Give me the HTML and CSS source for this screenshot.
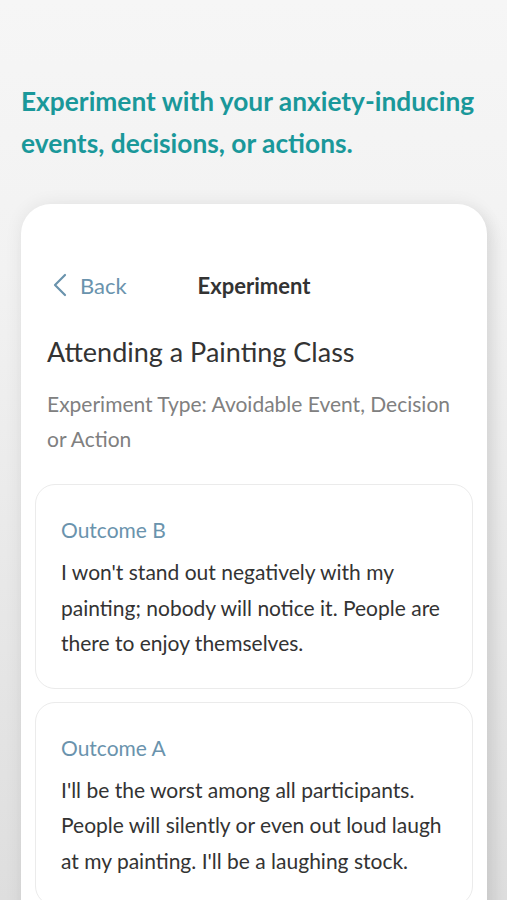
FILE: index.html
```html
<!DOCTYPE html>
<html lang="en">
<head>
    <meta charset="UTF-8">
    <meta name="viewport" content="width=device-width, initial-scale=1.0">
    <title>Experiment</title>
    <link rel="stylesheet" href="styles.css">
</head>
<body>
    <div class="page">
        <h1 class="intro">Experiment with your anxiety-inducing events, decisions, or actions.</h1>

        <div class="phone">
            <div class="nav">
                <a class="back" href="#">
                    <svg width="16" height="24" viewBox="0 0 16 24" fill="none" stroke="#6a93ad" stroke-width="2.2" stroke-linecap="round" stroke-linejoin="round">
                        <path d="M13 2 L3 12 L13 22"/>
                    </svg>
                    <span>Back</span>
                </a>
                <div class="nav-title">Experiment</div>
                <div></div>
            </div>

            <h2 class="title">Attending a Painting Class</h2>
            <p class="type">Experiment Type: Avoidable Event, Decision or Action</p>

            <div class="outcome">
                <div class="outcome-label">Outcome B</div>
                <p class="outcome-text">I won't stand out negatively with my painting; nobody will notice it. People are there to enjoy themselves.</p>
            </div>

            <div class="outcome">
                <div class="outcome-label">Outcome A</div>
                <p class="outcome-text">I'll be the worst among all participants. People will silently or even out loud laugh at my painting. I'll be a laughing stock.</p>
            </div>
        </div>
    </div>
</body>
</html>
```

FILE: styles.css
```css
body {
    margin: 0;
    padding: 0;
    font-family: Lato, "Open Sans", sans-serif;
    background: linear-gradient(180deg, #f6f6f6 0%, #f2f2f2 30%, #dedede 100%);
    height: 900px;
    overflow: hidden;
}

.page {
    padding: 80px 20px 0 21px;
}

.intro {
    margin: 0 0 40px 0;
    font-size: 26.3px;
    font-weight: 700;
    line-height: 42px;
    color: #1a989a;
}

.phone {
    background-color: white;
    border-radius: 30px 30px 0 0;
    padding: 66px 14px 0 14px;
    height: 700px;
    box-shadow: 0 0 18px rgba(0, 0, 0, 0.07), 8px 8px 16px rgba(0, 0, 0, 0.06);
}

.nav {
    display: grid;
    grid-template-columns: 1fr auto 1fr;
    align-items: center;
    height: 30px;
    font-size: 22px;
}

.back {
    display: flex;
    align-items: center;
    gap: 12px;
    padding-left: 17px;
    color: #6a93ad;
    text-decoration: none;
}

.back svg {
    display: block;
}

.nav-title {
    font-weight: 700;
    color: #333;
}

.title {
    margin: 35px 0 0 0;
    padding: 0 12px;
    font-size: 27px;
    font-weight: 400;
    line-height: 34px;
    color: #333;
}

.type {
    margin: 17px 0 28px 0;
    padding: 0 12px;
    font-size: 21px;
    line-height: 35px;
    color: #808080;
}

.outcome {
    border: 1px solid #ebebeb;
    border-radius: 20px;
    padding: 27px 25px 27px 25px;
    margin-bottom: 13px;
}

.outcome-label {
    font-size: 21px;
    line-height: 35px;
    color: #6a93ad;
}

.outcome-text {
    margin: 7px 0 0 0;
    font-size: 21px;
    line-height: 35.5px;
    color: #333;
}
```
